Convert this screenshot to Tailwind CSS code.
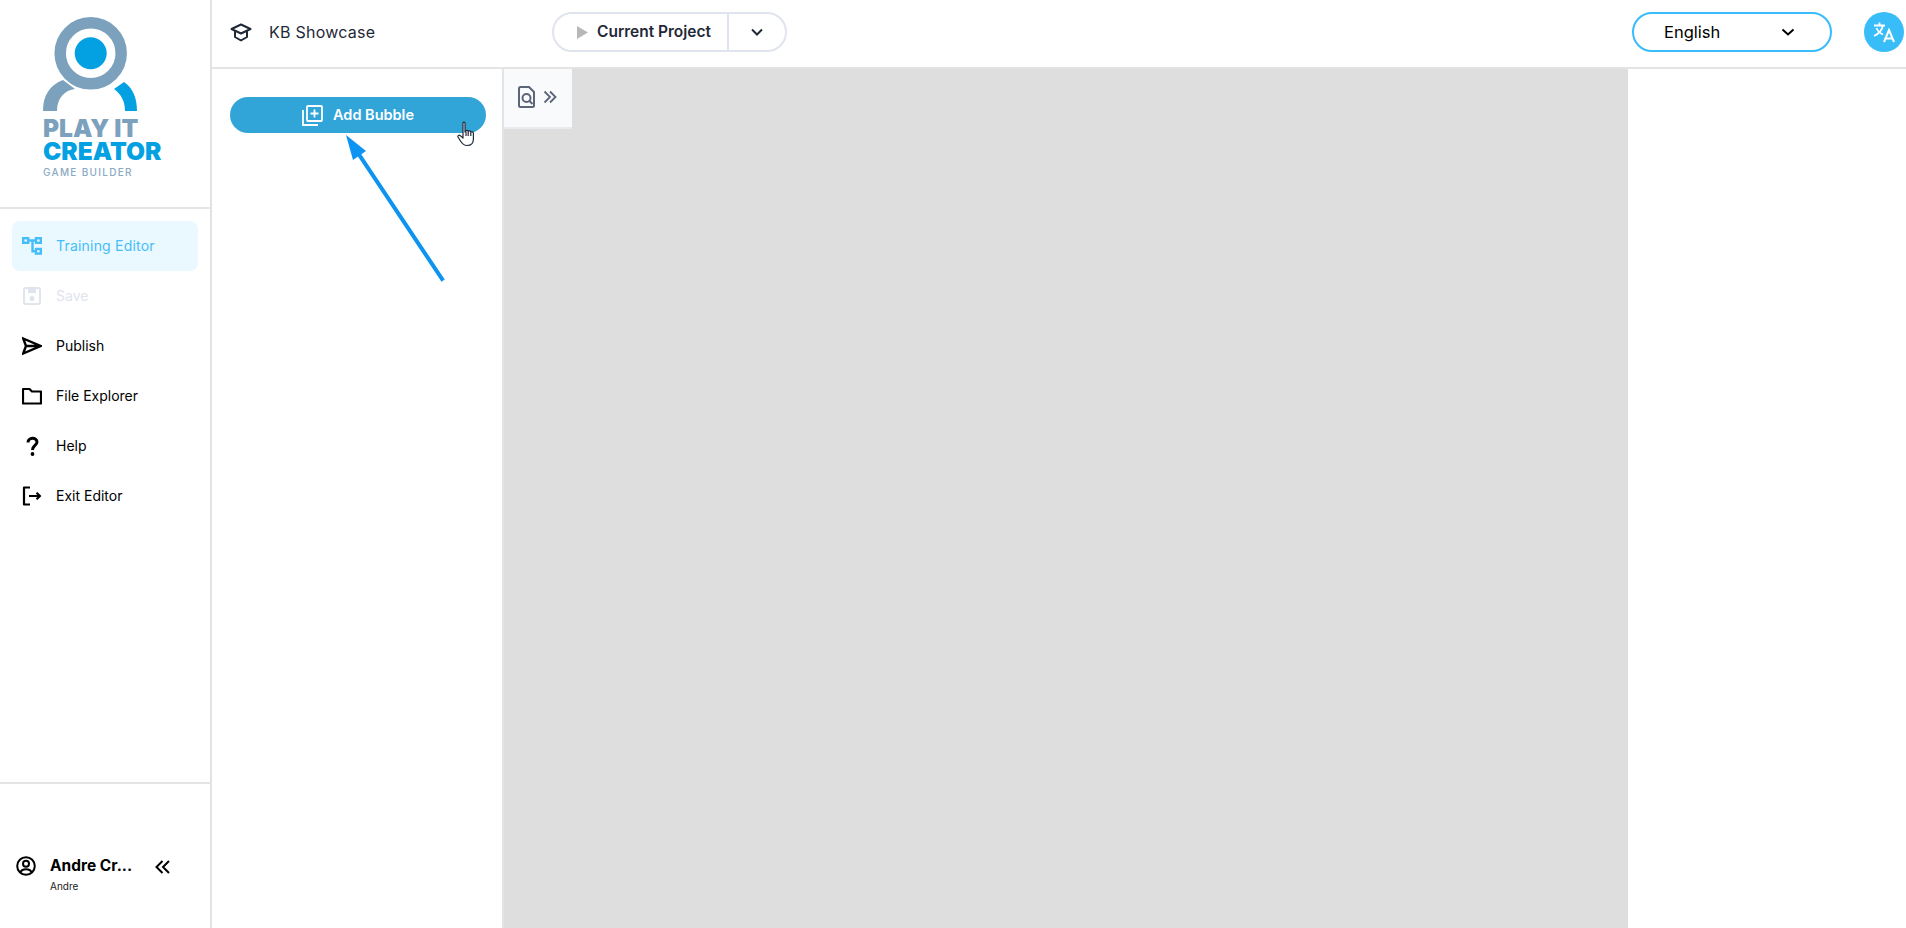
<!DOCTYPE html>
<html>
<head>
<meta charset="utf-8">
<script src="https://cdn.jsdelivr.net/npm/@tailwindcss/browser@4"></script>
</head>
<body class="font-['Inter','Liberation_Sans',sans-serif] bg-white">
<div class="relative flex h-[928px] w-[1906px] overflow-hidden bg-white">
  <!-- Sidebar -->
  <aside class="flex h-full w-[212px] shrink-0 flex-col border-r-2 border-[#e2e2e2]">
    <div class="flex h-[209px] shrink-0 flex-col items-start border-b-2 border-[#e4e4e4] pl-[43px] pt-[16px]">
      <svg width="96" height="96" viewBox="0 0 96 96" class="block">
        <circle cx="47.7" cy="37.3" r="30.5" fill="none" stroke="#7ba1bd" stroke-width="11.5"/>
        <circle cx="47.7" cy="37.3" r="16" fill="#04a1e2"/>
        <path d="M0 95 C0 79 7 69 20 64 L32 73 C22 74 14 82 14 95 Z" fill="#7ba1bd"/>
        <path d="M71 73 L81 66 C90 72 94 82 94 95 L82 95 C82 85 78 78 71 73 Z" fill="#04a1e2"/>
      </svg>
      <div class="mt-[5px] h-[23px] text-[24.5px] leading-[23px] font-black whitespace-nowrap text-[#7ba1bd]">PLAY IT</div>
      <div class="h-[23px] text-[24.5px] leading-[23px] font-black whitespace-nowrap text-[#04a1e2]">CREATOR</div>
      <div class="mt-[3px] text-[10px] leading-[12px] font-medium tracking-[1.3px] whitespace-nowrap text-[#8aaac3]">GAME BUILDER</div>
    </div>
    <nav class="flex flex-1 flex-col px-3 pt-3 text-[14px] text-black">
      <a class="flex h-[50px] items-center gap-[14px] rounded-lg bg-[#eaf8ff] px-[10px] text-[#45bdf9]">
        <svg width="20" height="20" viewBox="0 0 20 20" fill="none" stroke="currentColor" stroke-width="2.4"><rect x="1.2" y="2.2" width="5" height="4.6"/><rect x="14" y="2.2" width="4.8" height="4.6"/><rect x="14" y="13" width="4.8" height="4.6"/><path d="M6 4.5h8M10.5 4.5V15.3H14"/></svg>
        <span class="pb-[2px] tracking-[0.2px]">Training Editor</span>
      </a>
      <a class="flex h-[50px] items-center gap-[14px] px-[10px] text-[#e0e4ec]">
        <svg width="20" height="20" viewBox="0 0 20 20" fill="none"><rect x="2" y="2" width="16" height="16" rx="2" stroke="currentColor" stroke-width="2"/><rect x="6" y="3" width="8" height="4" fill="currentColor"/><circle cx="10" cy="12.5" r="2.5" fill="currentColor"/></svg>
        <span class="pb-[2px]">Save</span>
      </a>
      <a class="flex h-[50px] items-center gap-[14px] px-[10px]">
        <svg width="20" height="20" viewBox="0 0 20 20" fill="none" stroke="currentColor" stroke-width="2.4" stroke-linejoin="miter"><path d="M1.2 2.5 L18.5 10 L1.2 17.5 L4 10 Z M4 10 H17"/></svg>
        <span class="pb-[2px]">Publish</span>
      </a>
      <a class="flex h-[50px] items-center gap-[14px] px-[10px]">
        <svg width="20" height="20" viewBox="0 0 20 20" fill="none" stroke="currentColor" stroke-width="2.2" stroke-linejoin="round"><path d="M1 3 H7.5 L10 5.5 H19 V17.5 H1 Z"/></svg>
        <span class="pb-[2px]">File Explorer</span>
      </a>
      <a class="flex h-[50px] items-center gap-[14px] px-[10px]">
        <svg width="20" height="20" viewBox="0 0 20 20" fill="none" stroke="currentColor" stroke-width="3"><path d="M6 6.5 C6 1 15 1 15 6 C15 9.5 10.5 9.5 10.5 14"/><circle cx="10.5" cy="18" r="1.9" fill="currentColor" stroke="none"/></svg>
        <span class="pb-[2px]">Help</span>
      </a>
      <a class="flex h-[50px] items-center gap-[14px] px-[10px]">
        <svg width="20" height="20" viewBox="0 0 20 20" fill="none" stroke="currentColor" stroke-width="2.2" stroke-linejoin="round"><path d="M8 1.5 H2 V18.5 H8 M7 10 H18 M14.5 6.8 L18 10 L14.5 13.2"/></svg>
        <span class="pb-[2px]">Exit Editor</span>
      </a>
    </nav>
    <div class="flex h-[146px] shrink-0 items-start border-t-2 border-[#e4e4e4] pl-4 pt-[71px]">
      <svg width="20" height="20" viewBox="0 0 20 20" fill="none" stroke="black" stroke-width="2" class="mt-[1px] shrink-0"><circle cx="10" cy="10" r="8.8"/><circle cx="10" cy="7.8" r="3"/><path d="M4.5 16.5 C5.5 12 14.5 12 15.5 16.5"/></svg>
      <div class="ml-[14px] w-[84px]">
        <div class="text-[15.5px] leading-[22px] font-bold whitespace-nowrap text-black">Andre Cr...</div>
        <div class="mt-[2px] text-[10px] leading-[14px] text-[#222]">Andre</div>
      </div>
      <svg width="15" height="14" viewBox="0 0 15 14" fill="none" stroke="black" stroke-width="2" class="ml-[21px] mt-[5px] shrink-0"><path d="M7.5 1 L1.5 7 L7.5 13 M14 1 L8 7 L14 13"/></svg>
    </div>
  </aside>

  <div class="flex min-w-0 flex-1 flex-col">
    <!-- Header -->
    <header class="flex h-[69px] shrink-0 items-center border-b-2 border-[#e4e4e4] pb-[3px] pl-[18px] text-[#1f2937]">
      <svg width="22" height="22" viewBox="0 0 22 22" fill="none" stroke="#1f2937" stroke-width="2" stroke-linejoin="round"><path d="M1.5 8 L11 3.5 L20.5 8 L11 12.5 Z"/><path d="M5 10 V16 L11 19.5 L17 16 V10"/></svg>
      <span class="ml-[17px] w-[283px] text-[16px] tracking-[0.25px]">KB Showcase</span>
      <div class="flex h-[40px] w-[235px] items-center rounded-full border-2 border-[#e0e4ec]">
        <div class="flex h-full w-[175px] items-center border-r-2 border-[#e0e4ec] pl-[23px]">
          <svg width="11" height="13" viewBox="0 0 11 13" fill="#b8b8b8"><path d="M0 0 L11 6.5 L0 13 Z"/></svg>
          <span class="ml-[9px] text-[15.5px] font-semibold whitespace-nowrap">Current Project</span>
        </div>
        <div class="flex flex-1 items-center justify-center">
          <svg width="14" height="14" viewBox="0 0 14 14" fill="none" stroke="#1f2937" stroke-width="2"><path d="M2 4.5 L7 9.5 L12 4.5"/></svg>
        </div>
      </div>
      <div class="ml-auto flex h-[40px] w-[200px] items-center justify-between rounded-full border-2 border-[#38bdf8] pl-[30px] pr-[35px] text-[16.5px] text-black">
        <span>English</span>
        <svg width="14" height="14" viewBox="0 0 14 14" fill="none" stroke="black" stroke-width="2"><path d="M1.5 4.5 L7 9.5 L12.5 4.5"/></svg>
      </div>
      <div class="mr-[2px] ml-[32px] flex h-[40px] w-[40px] items-center justify-center rounded-full bg-[#38bdf8]">
        <svg width="24" height="24" viewBox="0 0 24 24" fill="none" stroke="white" stroke-width="1.8"><path d="M2 5.5 H13 M7.5 2.5 V5.5 M11 5.5 C10 10 6.5 14 2 16 M4.5 8 C6 11.5 8.5 13.5 11 14.5"/><path d="M12 22 L17 10 L22 22 M13.6 18.5 H20.4" stroke-width="2"/></svg>
      </div>
    </header>
    <!-- Content -->
    <div class="flex min-h-0 flex-1">
      <div class="relative w-[292px] shrink-0 border-r-2 border-[#e4e4e4] px-[18px] pt-[28px]">
        <button class="flex h-[36px] w-[256px] items-center justify-center gap-[10px] rounded-full bg-[#32a5d8] text-[14.5px] font-semibold text-white">
          <svg width="21" height="21" viewBox="0 0 21 21" fill="none" stroke="white" stroke-width="1.8"><rect x="5" y="1" width="15" height="15" rx="1"/><path d="M1 5 V20 H16 M12.5 4.5 V12.5 M8.5 8.5 H16.5"/></svg>
          <span>Add Bubble</span>
        </button>
      </div>
      <div class="flex w-[1124px] shrink-0 items-start bg-[#dedede]">
        <div class="flex h-[60px] w-[68px] items-center justify-center gap-[8px] border-b-2 border-[#e8eaf0] bg-[#f9fafb] pb-[2px] pr-[2px]">
          <svg width="17" height="22" viewBox="0 0 17 22" fill="none" stroke="#5b6478" stroke-width="2" stroke-linejoin="round"><path d="M2.5 1 H11 L16 6 V19.5 Q16 21 14.5 21 H2.5 Q1 21 1 19.5 V2.5 Q1 1 2.5 1 Z"/><circle cx="8.5" cy="12" r="4"/><path d="M11.5 15 L14.5 18"/></svg>
          <svg width="14" height="14" viewBox="0 0 14 14" fill="none" stroke="#5b6478" stroke-width="1.8"><path d="M1.5 1.5 L7 7 L1.5 12.5 M7 1.5 L12.5 7 L7 12.5"/></svg>
        </div>
      </div>
    </div>
  </div>

  <!-- Annotation arrow -->
  <svg class="absolute top-[130px] left-[340px]" width="110" height="155" viewBox="0 0 110 155" fill="none">
    <path d="M102 149 L16 20" stroke="#0d93f2" stroke-width="4" stroke-linecap="square"/>
    <path d="M6 5 L26 21 L13 30 Z" fill="#0d93f2"/>
  </svg>
  <!-- Cursor -->
  <svg class="absolute top-[121px] left-[457px]" width="20" height="26" viewBox="0 0 20 26" stroke="#1f2937" stroke-width="1.2" fill="white" stroke-linejoin="round">
    <path d="M6 2 C6 0.8 8 0.8 8 2 V11 L9 10 C9.5 9 11 9 11.2 10.5 C12 9.5 13.6 9.8 13.8 11.2 C14.6 10.4 16.4 10.8 16.4 12.4 V18 C16.4 22 14 24.5 10 24.5 C6.5 24.5 5 22.5 3.5 20 L1 16 C0.4 14.8 2 13.5 3.4 14.8 L6 17 Z"/>
    <path d="M9 11 V15 M11.2 10.5 V15 M13.8 11.2 V15" fill="none"/>
  </svg>
</div>
</body>
</html>
